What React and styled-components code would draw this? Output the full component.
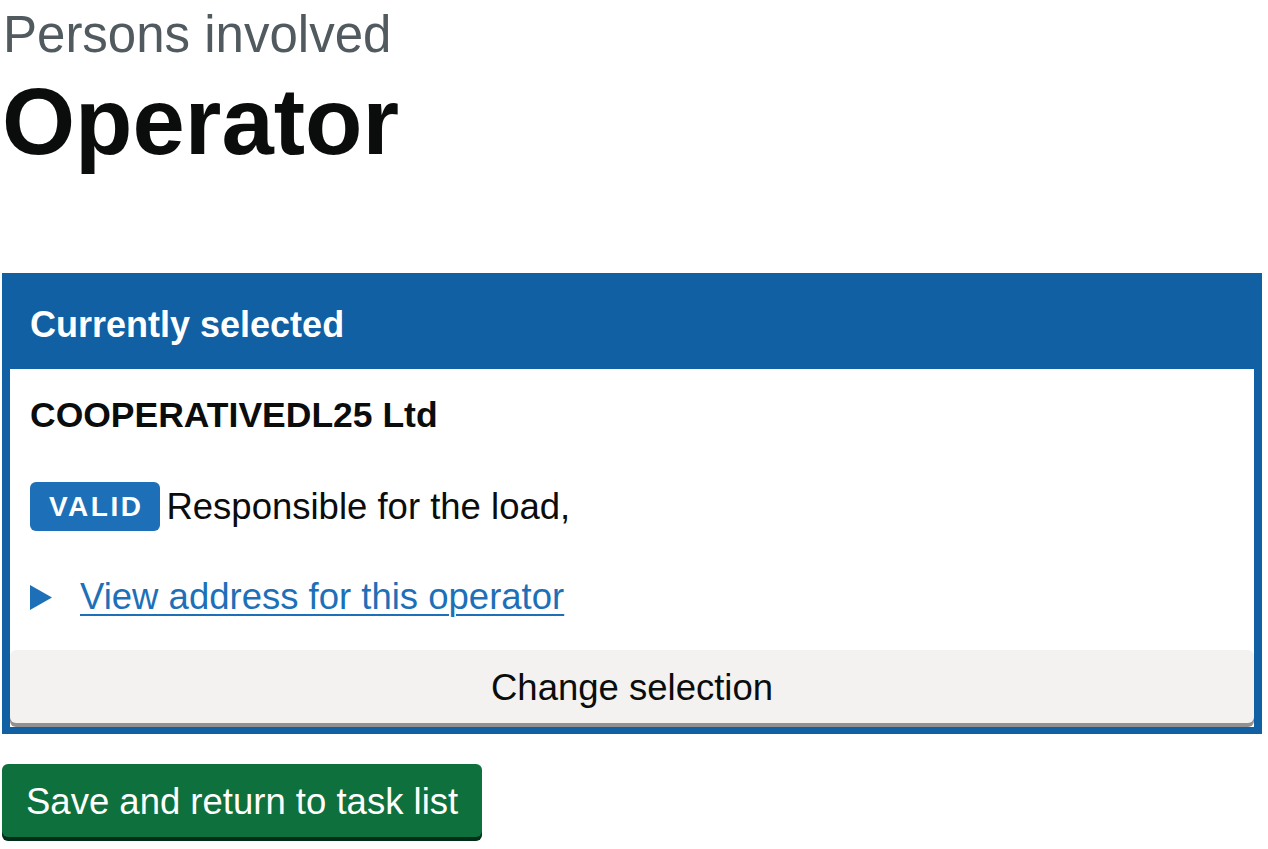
import React from 'react'
import styled, { createGlobalStyle } from 'styled-components'

const GlobalStyle = createGlobalStyle`
    html, body {
        margin: 0;
        padding: 0;
        background: #ffffff;
    }
    body {
        font-family: "Liberation Sans", Arial, sans-serif;
        color: #0b0c0c;
    }
`

const Page = styled.main`
    padding: 5px 6px 0 2px;
`

const Caption = styled.span`
    display: block;
    margin-left: 1px;
    font-size: 51px;
    line-height: 60px;
    color: #505a5f;
`

const Heading = styled.h1`
    margin: 7px 0 101px 0;
    font-size: 94px;
    line-height: 100px;
    font-weight: 700;
    color: #0b0c0c;
`

const Panel = styled.section`
    background: #1060a3;
    padding: 0 8px 7px 8px;
`

const PanelHeader = styled.h2`
    margin: 0;
    padding: 32px 20px 24px;
    font-size: 36px;
    line-height: 40px;
    font-weight: 700;
    color: #ffffff;
`

const PanelBody = styled.div`
    background: #ffffff;
    display: flex;
    flex-direction: column;
`

const Content = styled.div`
    padding: 26px 20px 33px;
    display: flex;
    flex-direction: column;
`

const Name = styled.h3`
    margin: 0 0 47px;
    font-size: 35.5px;
    line-height: 40px;
    font-weight: 700;
`

const StatusRow = styled.div`
    display: flex;
    align-items: center;
    gap: 6px;
    margin-bottom: 46px;
    font-size: 36.5px;
    line-height: 40px;
`

const Tag = styled.strong`
    display: inline-flex;
    align-items: center;
    height: 49px;
    padding: 0 17px 0 19px;
    border-radius: 6px;
    background: ${p => p.$colour || '#1d70b8'};
    color: #ffffff;
    font-size: 28px;
    font-weight: 700;
    letter-spacing: 2.5px;
    text-transform: uppercase;
`

const Details = styled.div`
    display: flex;
    align-items: center;
    gap: 28px;
    height: 40px;
    color: #1d70b8;
    font-size: 36.5px;
    line-height: 40px;

    svg {
        flex: none;
    }

    a {
        color: #1d70b8;
        text-decoration: underline;
        text-decoration-thickness: 2px;
        text-underline-offset: 5px;
    }
`

const Button = styled.button`
    display: flex;
    align-items: center;
    justify-content: center;
    height: 73px;
    padding: 3px 24px 0;
    margin: 0 0 4px;
    border: 0;
    border-radius: 6px;
    font-family: "Liberation Sans", Arial, sans-serif;
    font-size: 36.5px;
    cursor: pointer;
    background: ${p => (p.$secondary ? '#f3f2f1' : '#0e703d')};
    color: ${p => (p.$secondary ? '#0b0c0c' : '#ffffff')};
    box-shadow: 0 4px 0 ${p => (p.$secondary ? '#929191' : '#002d18')};
    width: ${p => (p.$block ? '100%' : 'auto')};
`

const Actions = styled.div`
    margin-top: 30px;
    display: flex;
`

function Arrow() {
    return (
        <svg width="22" height="25" viewBox="0 0 22 25" aria-hidden="true">
            <polygon points="0,0 22,12.5 0,25" fill="#1d70b8" />
        </svg>
    )
}

function App() {
    return (
        <>
            <GlobalStyle />
            <Page>
                <Caption>Persons involved</Caption>
                <Heading>Operator</Heading>
                <Panel>
                    <PanelHeader>Currently selected</PanelHeader>
                    <PanelBody>
                        <Content>
                            <Name>COOPERATIVEDL25 Ltd</Name>
                            <StatusRow>
                                <Tag>Valid</Tag>
                                <span>Responsible for the load,</span>
                            </StatusRow>
                            <Details>
                                <Arrow />
                                <a href="#">View address for this operator</a>
                            </Details>
                        </Content>
                        <Button $secondary $block>Change selection</Button>
                    </PanelBody>
                </Panel>
                <Actions>
                    <Button>Save and return to task list</Button>
                </Actions>
            </Page>
        </>
    )
}

export default App
